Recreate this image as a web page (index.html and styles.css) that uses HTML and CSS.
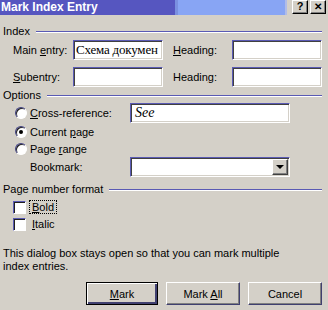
FILE: index.html
```html
<!DOCTYPE html>
<html>
    <head>
        <title>Mark Index Entry</title>
        <link rel="stylesheet" href="styles.css">
    </head>
    <body>
        <div class="dialog">
            <div class="titlebar">
                <div class="caption">Mark Index Entry</div>
                <div class="caption-buttons">
                    <span class="cap-btn">?</span>
                    <span class="cap-btn cap-close">&#x2715;</span>
                </div>
            </div>

            <div class="content">
                <div class="group-head"><span>Index</span><div class="rule"></div></div>
                <div class="row row-main">
                    <label class="lbl lbl-first">Main <u>e</u>ntry:</label>
                    <div class="field field-text">Схема докумен</div>
                    <label class="lbl lbl-second"><u>H</u>eading:</label>
                    <div class="field"></div>
                </div>
                <div class="row row-sub">
                    <label class="lbl lbl-first"><u>S</u>ubentry:</label>
                    <div class="field"></div>
                    <label class="lbl lbl-second">Headin<u>g</u>:</label>
                    <div class="field"></div>
                </div>

                <div class="group-head head-options"><span>Options</span><div class="rule"></div></div>
                <div class="row row-xref">
                    <span class="radio"></span>
                    <label class="opt-lbl"><u>C</u>ross-reference:</label>
                    <div class="field field-wide field-see">See</div>
                </div>
                <div class="row row-radio">
                    <span class="radio checked"></span>
                    <label class="opt-lbl">Current <u>p</u>age</label>
                </div>
                <div class="row row-radio">
                    <span class="radio"></span>
                    <label class="opt-lbl">Page <u>r</u>ange</label>
                </div>
                <div class="row row-bookmark">
                    <label class="bm-lbl">Bookmark:</label>
                    <div class="field field-wide combo">
                        <span class="combo-btn"><span class="arrow"></span></span>
                    </div>
                </div>

                <div class="group-head head-format"><span>Page number format</span><div class="rule"></div></div>
                <div class="row row-check">
                    <span class="check"></span>
                    <label class="chk-lbl focus"><u>B</u>old</label>
                </div>
                <div class="row row-check row-italic">
                    <span class="check"></span>
                    <label class="chk-lbl"><u>I</u>talic</label>
                </div>

                <p class="note">This dialog box stays open so that you can mark multiple index entries.</p>

                <div class="buttons">
                    <button class="btn btn-default"><u>M</u>ark</button>
                    <button class="btn">Mark <u>A</u>ll</button>
                    <button class="btn">Cancel</button>
                </div>
            </div>
        </div>
    </body>
</html>
```

FILE: styles.css
```css
* {
    box-sizing: border-box;
}

body {
    margin: 0;
    background: #d4d0c8;
    font-family: "Liberation Sans", Arial, sans-serif;
    font-size: 11px;
    color: #000;
}

u {
    text-decoration: underline;
    text-underline-offset: 1px;
}

.dialog {
    width: 328px;
    height: 310px;
    overflow: hidden;
}

/* title bar */
.titlebar {
    height: 15px;
    display: flex;
    align-items: stretch;
}

.caption {
    width: 287px;
    padding-left: 1px;
    background: linear-gradient(to right, #5656c0 0, #5656c0 175px, #7a90e0 175px, #7a90e0 178px, #88a5f4 178px, #88a5f4 285px, #b0bce8 285px);
    color: #fff;
    font-weight: bold;
    font-size: 12px;
    line-height: 15px;
    white-space: nowrap;
}

.caption-buttons {
    display: flex;
    gap: 2px;
    padding: 0 0 0 5px;
    align-items: flex-start;
}

.cap-btn {
    width: 16px;
    height: 14px;
    background: #d4d0c8;
    border: 1px solid;
    border-color: #fff #000 #000 #fff;
    box-shadow: inset -1px -1px #808080;
    font-weight: bold;
    font-size: 11px;
    line-height: 11px;
    text-align: center;
}

.cap-close {
    font-size: 10px;
}

/* body */
.content {
    padding: 0 6px 0 3px;
}

.group-head {
    display: flex;
    align-items: center;
    height: 12px;
    margin-top: 10px;
    line-height: 12px;
}

.group-head .rule {
    flex: 1;
    height: 2px;
    margin-left: 6px;
    margin-top: 1px;
    border-top: 1px solid #5a5ab4;
    border-bottom: 1px solid #fff;
}

.head-options {
    margin-top: 2px;
}

.head-format {
    margin-top: 6px;
}

.row {
    display: flex;
    align-items: center;
}

.row-main {
    margin-top: 3px;
    height: 20px;
}

.row-sub {
    margin-top: 7px;
    height: 20px;
}

.lbl {
    white-space: nowrap;
}

.lbl-first {
    width: 60px;
    margin-left: 10px;
}

.lbl-second {
    width: 59px;
    margin-left: 10px;
}

.field {
    width: 90px;
    height: 20px;
    background: #fff;
    border: 1px solid;
    border-color: #5a5ab4 #fff #fff #5a5ab4;
    box-shadow: inset 1px 1px #404040, inset -1px -1px #d4d0c8;
    overflow: hidden;
    white-space: nowrap;
}

.field-text {
    font-family: "Liberation Serif", "Times New Roman", serif;
    font-size: 13px;
    line-height: 17px;
    padding-left: 2px;
    letter-spacing: -0.2px;
}

.field-wide {
    width: 160px;
}

.field-see {
    font-family: "Liberation Serif", "Times New Roman", serif;
    font-style: italic;
    font-size: 14px;
    line-height: 17px;
    padding-left: 4px;
}

/* options */
.row-xref {
    margin-top: 2px;
    height: 20px;
}

.row-xref .opt-lbl {
    width: 100px;
}

.row-radio {
    height: 16px;
    margin-top: 1px;
}

.row-radio + .row-radio {
    margin-top: 1px;
}

.radio {
    width: 12px;
    height: 12px;
    margin-left: 12px;
    margin-right: 3px;
    border-radius: 50%;
    background: #fff;
    border: 1px solid;
    border-color: #404080 #fff #fff #404080;
    box-shadow: inset 1px 1px #202020;
    position: relative;
}

.radio.checked::after {
    content: "";
    position: absolute;
    left: 3px;
    top: 3px;
    width: 4px;
    height: 4px;
    border-radius: 50%;
    background: #000;
}

.row-bookmark {
    height: 20px;
}

.bm-lbl {
    width: 100px;
    margin-left: 27px;
}

.combo {
    display: flex;
    justify-content: flex-end;
    align-items: center;
    padding-right: 1px;
}

.combo-btn {
    width: 16px;
    height: 16px;
    background: #d4d0c8;
    border: 1px solid;
    border-color: #fff #404040 #404040 #fff;
    box-shadow: inset -1px -1px #808080;
    display: flex;
    justify-content: center;
    align-items: center;
}

.arrow {
    width: 0;
    height: 0;
    border-left: 4px solid transparent;
    border-right: 4px solid transparent;
    border-top: 4px solid #000;
}

/* checkboxes */
.row-check {
    height: 14px;
    margin-top: 5px;
}

.row-italic {
    margin-top: 3px;
}

.check {
    width: 13px;
    height: 13px;
    margin-left: 10px;
    margin-right: 3px;
    background: #fff;
    border: 1px solid;
    border-color: #5a5ab4 #fff #fff #5a5ab4;
    box-shadow: inset 1px 1px #202020;
}

.chk-lbl {
    padding: 0 2px;
    line-height: 12px;
    border: 1px solid transparent;
}

.chk-lbl.focus {
    border: 1px dotted #000;
}

.note {
    margin: 16px 0 0;
    line-height: 13px;
    width: 280px;
}

/* buttons */
.buttons {
    display: flex;
    justify-content: flex-end;
    gap: 8px;
    margin-top: 9px;
}

.btn {
    width: 74px;
    height: 23px;
    padding: 0;
    background: #d4d0c8;
    font-family: "Liberation Sans", Arial, sans-serif;
    font-size: 11px;
    color: #000;
    border: 1px solid;
    border-color: #fff #404070 #404070 #fff;
    box-shadow: inset -1px -1px #808080;
}

.btn-default {
    width: 72px;
    border: 1px solid #000;
    box-shadow: inset 1px 1px #fff, inset -2px -2px #404070;
}
```
